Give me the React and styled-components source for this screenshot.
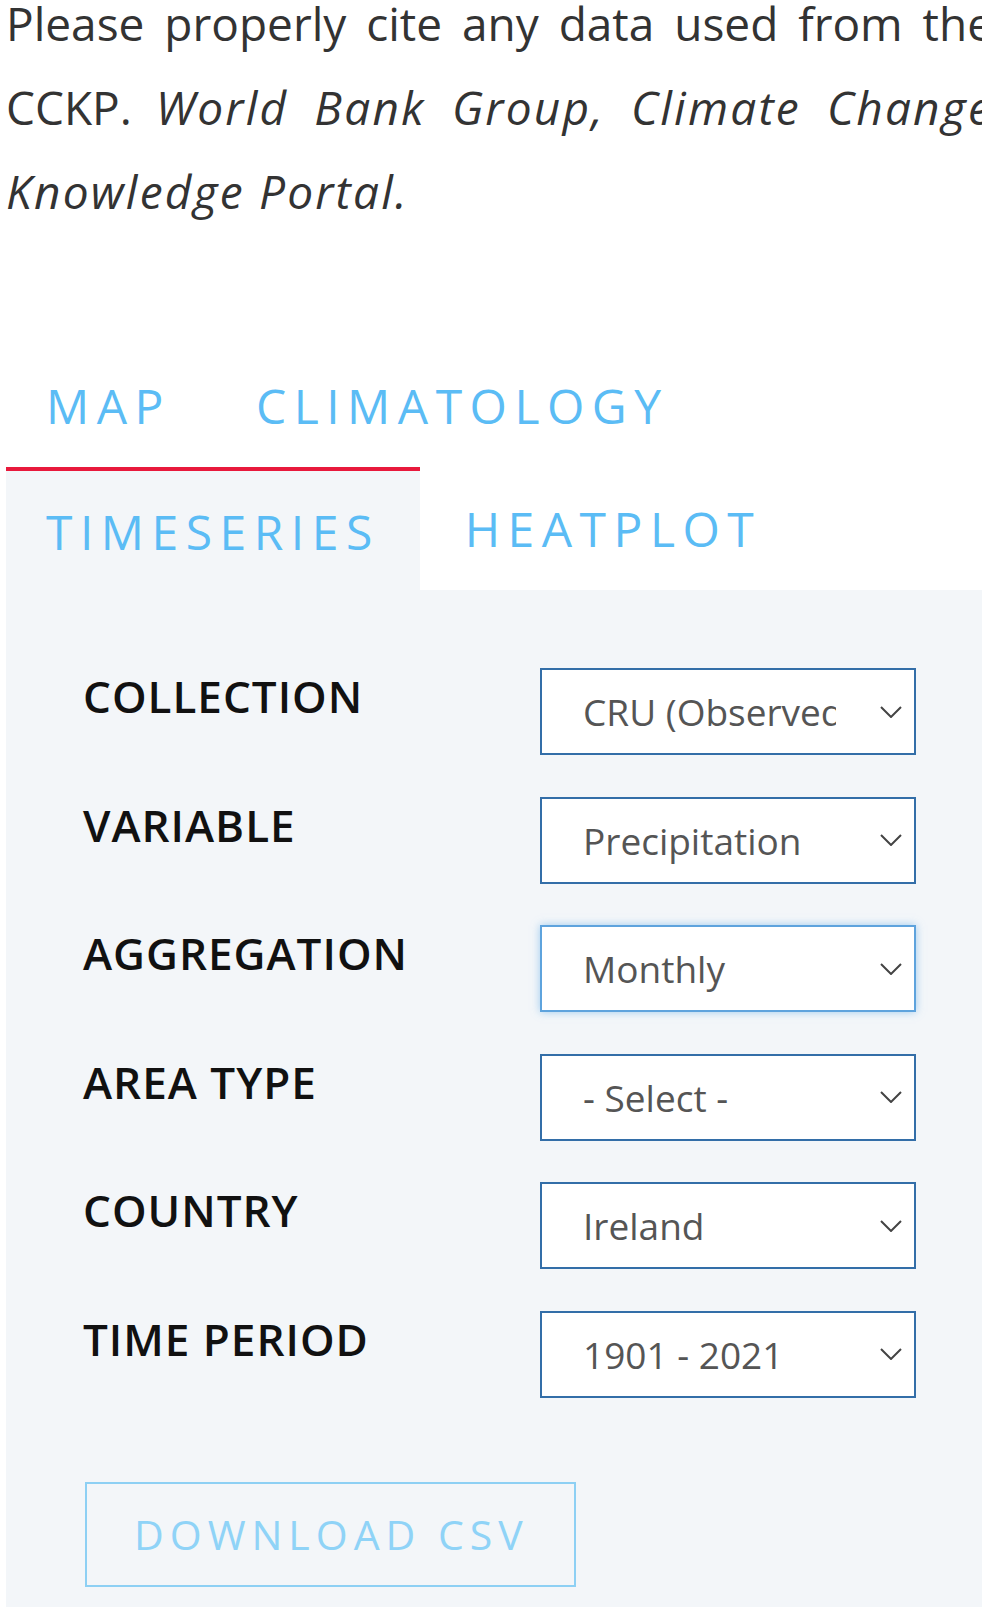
import React from 'react';
import styled, { createGlobalStyle } from 'styled-components';

const GlobalStyle = createGlobalStyle`
  html, body {
    margin: 0;
    padding: 0;
    background: #fff;
    overflow: hidden;
  }
  body {
    font-family: "Open Sans", "Liberation Sans", sans-serif;
  }
`

const Page = styled.div`
  width: 1000px;
  padding-left: 6px;
`

const Citation = styled.p`
  margin: -19px 13px 0 0;
  font-size: 46px;
  line-height: 84px;
  color: #333;
  text-align: justify;

  em {
    letter-spacing: 2.2px;
  }
`

const TabList = styled.ul`
  display: flex;
  flex-wrap: wrap;
  margin: 111px 0 0;
  padding: 0;
  list-style: none;
`

const Tab = styled.li`
  margin-right: 5px;
  padding: ${p => (p.$active ? '28px 40px 26px' : '29px 40px')};
  border-top: ${p => (p.$active ? '4px solid #e8193c' : 'none')};
  background: ${p => (p.$active ? '#f3f6f9' : 'transparent')};
  color: #5bbcf5;
  font-size: 48px;
  line-height: normal;
  letter-spacing: 7.5px;
  cursor: pointer;
`

const Panel = styled.div`
  background: #f3f6f9;
  padding: 78px 0 120px 77px;
`

const Form = styled.div`
  display: grid;
  grid-template-columns: 457px 376px;
  row-gap: 41.5px;
`

const Label = styled.div`
  font-size: 44px;
  font-weight: 600;
  line-height: 57px;
  letter-spacing: 1px;
  color: #111;
`

const SelectBox = styled.div`
  box-sizing: border-box;
  height: 87px;
  display: flex;
  align-items: center;
  padding: 0 12px 0 41px;
  background: #fff;
  border: 2px solid ${p => (p.$focused ? '#5ea3dd' : '#336ea8')};
  box-shadow: ${p => (p.$focused ? '0 0 8px rgba(102, 175, 233, 0.6)' : 'none')};
`

const SelectValue = styled.span`
  flex: 1;
  margin-right: 44px;
  overflow: hidden;
  white-space: nowrap;
  font-size: 37px;
  color: #555;
`

const DownloadButton = styled.button`
  box-sizing: border-box;
  height: 105px;
  margin: 84px 0 0 2px;
  padding: 0 45px 0 47px;
  display: inline-flex;
  align-items: center;
  background: transparent;
  border: 2px solid #8dd0f4;
  color: #8fd3f7;
  font-family: "Open Sans", "Liberation Sans", sans-serif;
  font-size: 41px;
  letter-spacing: 6px;
  cursor: pointer;
`

const Chevron = () => (
  <svg width="22" height="12" viewBox="0 0 22 12" fill="none">
    <polyline points="1,1 11,11 21,1" stroke="#444" strokeWidth="2" />
  </svg>
)

const fields = [
  { label: 'COLLECTION', value: 'CRU (Observed)' },
  { label: 'VARIABLE', value: 'Precipitation' },
  { label: 'AGGREGATION', value: 'Monthly', focused: true },
  { label: 'AREA TYPE', value: '- Select -' },
  { label: 'COUNTRY', value: 'Ireland' },
  { label: 'TIME PERIOD', value: '1901 - 2021' },
]

const App = () => (
  <Page>
    <GlobalStyle />
    <Citation>
      Please properly cite any data used from the CCKP.{' '}
      <em>World Bank Group, Climate Change Knowledge Portal.</em>
    </Citation>
    <TabList>
      <Tab>MAP</Tab>
      <Tab>CLIMATOLOGY</Tab>
      <Tab $active>TIMESERIES</Tab>
      <Tab>HEATPLOT</Tab>
    </TabList>
    <Panel>
      <Form>
        {fields.map(f => (
          <React.Fragment key={f.label}>
            <Label>{f.label}</Label>
            <SelectBox $focused={f.focused}>
              <SelectValue>{f.value}</SelectValue>
              <Chevron />
            </SelectBox>
          </React.Fragment>
        ))}
      </Form>
      <DownloadButton>DOWNLOAD CSV</DownloadButton>
    </Panel>
  </Page>
)

export default App;
